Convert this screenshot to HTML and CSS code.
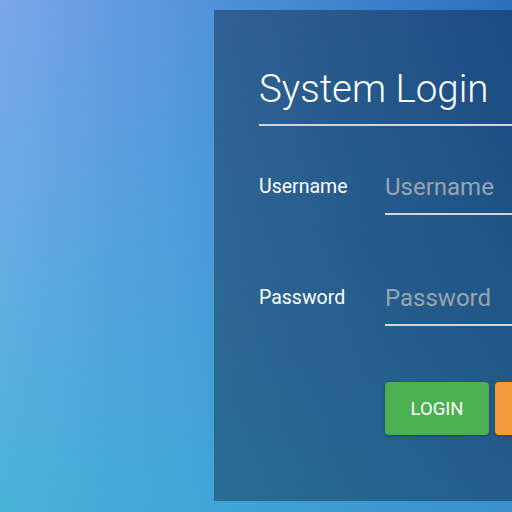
FILE: index.html
```html
<!DOCTYPE html>
<html>
<head>
<meta charset="utf-8">
<link rel="stylesheet" href="styles.css">
</head>
<body>
<div class="page">
  <div class="panel">
    <h1 class="title">System Login</h1>
    <div class="row row-first">
      <label class="label">Username</label>
      <div class="field"><input class="input" type="text" placeholder="Username"></div>
    </div>
    <div class="row row-second">
      <label class="label">Password</label>
      <div class="field"><input class="input" type="password" placeholder="Password"></div>
    </div>
    <div class="actions">
      <button class="btn btn-login">LOGIN</button>
      <button class="btn btn-reset">RESET</button>
    </div>
  </div>
</div>
</body>
</html>
```

FILE: styles.css
```css
html, body {
  margin: 0;
  padding: 0;
  width: 512px;
  height: 512px;
  overflow: hidden;
}
body {
  font-family: Roboto, "Noto Sans", sans-serif;
}
.page {
  position: relative;
  width: 512px;
  height: 512px;
  box-sizing: border-box;
  padding: 10px 0 11px 214px;
  background: linear-gradient(to right, #4ab4dc 0%, #40a5d6 42%, #3a90cc 100%);
  overflow: hidden;
}
.page::before {
  content: "";
  position: absolute;
  inset: 0;
  background: linear-gradient(to right, #7ba6e9 0%, #4f92d8 42%, #2b70bc 100%);
  -webkit-mask-image: linear-gradient(to bottom, #000 0%, rgba(0,0,0,0.55) 50%, transparent 100%);
  mask-image: linear-gradient(to bottom, #000 0%, rgba(0,0,0,0.55) 50%, transparent 100%);
}
.panel {
  position: relative;
  z-index: 1;
  width: 620px;
  height: 491px;
  box-sizing: border-box;
  padding: 58px 0 0 45px;
  background: rgba(0, 10, 30, 0.37);
}
.title {
  margin: 0;
  font-weight: 300;
  font-size: 38.5px;
  line-height: 42px;
  color: #fff;
  padding-bottom: 14px;
  border-bottom: 2px solid #d0d6de;
}
.row {
  display: flex;
  align-items: flex-start;
}
.row-first { margin-top: 47px; }
.row-second { margin-top: 69px; }
.label {
  width: 126px;
  font-size: 19.5px;
  line-height: 28px;
  font-weight: 400;
  color: #fff;
}
.field {
  flex: 1;
}
.input {
  display: block;
  width: 100%;
  box-sizing: border-box;
  border: none;
  border-bottom: 2px solid #d0d6de;
  background: transparent;
  font-family: Roboto, sans-serif;
  font-size: 24px;
  line-height: 28px;
  height: 42px;
  color: #fff;
  padding: 0 0 12px 0;
  outline: none;
}
.input::placeholder {
  color: #9aa5ae;
}
.actions {
  display: flex;
  gap: 6px;
  padding-left: 126px;
  margin-top: 56px;
}
.btn {
  width: 104px;
  height: 53px;
  border: none;
  border-radius: 4px;
  font-family: Roboto, sans-serif;
  font-size: 18.5px;
  color: #fff;
  box-shadow: 0 1px 3px rgba(0,0,0,0.3);
}
.btn-login { background: #4caf50; }
.btn-reset { background: #f39a3f; }
```
